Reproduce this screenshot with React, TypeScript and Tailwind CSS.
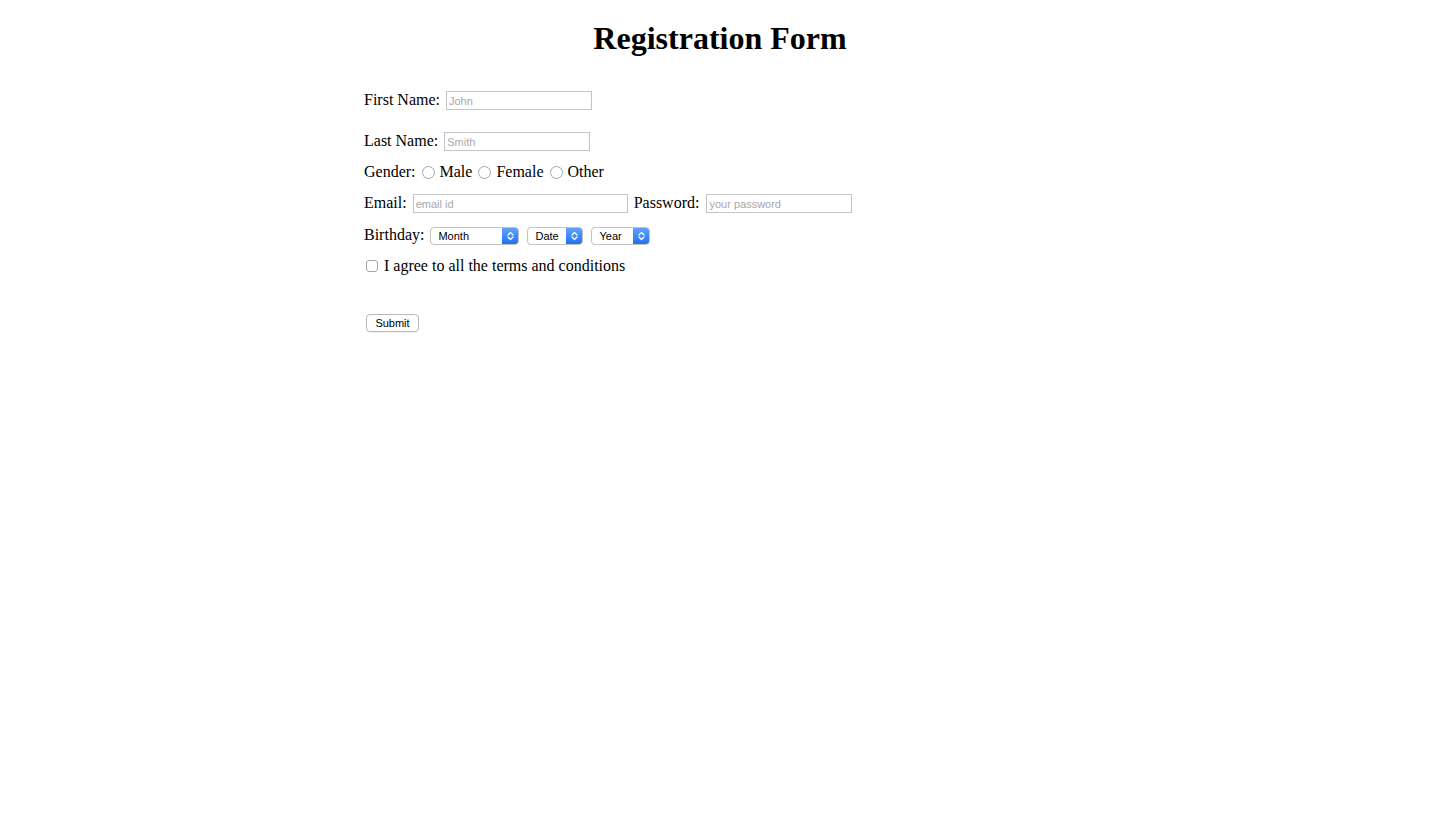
import React from 'react';

const serif = { fontFamily: '"Liberation Serif", "Times New Roman", serif' };

function TextBox({ placeholder, width, type = 'text' }: { placeholder: string; width: string; type?: string }) {
  return (
    <input
      type={type}
      placeholder={placeholder}
      className={`${width} h-[19px] border border-[#c4c4c4] bg-white px-[2px] pt-[1px] text-[11px] font-['Liberation_Sans',Arial,sans-serif] text-black placeholder:text-[#a8a8a8] outline-none`}
    />
  );
}

function Radio({ label }: { label: string }) {
  return (
    <span className="flex items-center">
      <span className="ml-[6px] mt-[1px] w-[13px] h-[13px] rounded-full border border-[#a6a6a6] bg-white" />
      <span className="ml-[5px]">{label}</span>
    </span>
  );
}

function Select({ label, width }: { label: string; width: string }) {
  return (
    <div className={`${width} h-[18px] flex rounded-[4px] border border-[#c2c2c2] bg-white overflow-hidden font-['Liberation_Sans',Arial,sans-serif] text-[11px] text-black`}>
      <span className="flex-1 pl-[7px] leading-[16px]">{label}</span>
      <span className="w-[16px] flex items-center justify-center bg-gradient-to-b from-[#5fa2f8] to-[#1f72f2]">
        <svg width="7" height="10" viewBox="0 0 7 10" fill="none" stroke="white" strokeWidth="1.3" strokeLinecap="round" strokeLinejoin="round">
          <path d="M1 4 L3.5 1.5 L6 4" />
          <path d="M1 6 L3.5 8.5 L6 6" />
        </svg>
      </span>
    </div>
  );
}

export default function App() {
  return (
    <div className="min-h-screen bg-white text-black text-[16px]" style={serif}>
      <h1 className="pt-[20px] text-center text-[32px] font-bold leading-[36px]">Registration Form</h1>

      <form className="w-[712px] mx-auto mt-[28px]">
        {/* names */}
        <div className="h-[31px] flex items-center">
          <span>First Name:</span>
          <span className="ml-[6px] mt-[1px] flex"><TextBox placeholder="John" width="w-[146px]" /></span>
        </div>
        <div className="h-[31px] mt-[10px] flex items-center">
          <span>Last Name:</span>
          <span className="ml-[6px] mt-[1px] flex"><TextBox placeholder="Smith" width="w-[146px]" /></span>
        </div>

        {/* gender */}
        <div className="h-[31px] flex items-center">
          <span>Gender:</span>
          <Radio label="Male" />
          <Radio label="Female" />
          <Radio label="Other" />
        </div>

        {/* email + password */}
        <div className="h-[31px] flex items-center">
          <span>Email:</span>
          <span className="ml-[6px] mt-[1px] flex"><TextBox placeholder="email id" width="w-[215px]" /></span>
          <span className="ml-[6px]">Password:</span>
          <span className="ml-[7px] mt-[1px] flex"><TextBox type="password" placeholder="your password" width="w-[146px]" /></span>
        </div>

        {/* birthday */}
        <div className="h-[31px] mt-[1px] flex items-center gap-[8px]">
          <span className="mr-[-2px]">Birthday:</span>
          <span className="mt-[2px] flex"><Select label="Month" width="w-[89px]" /></span>
          <span className="mt-[2px] flex"><Select label="Date" width="w-[56px]" /></span>
          <span className="mt-[2px] flex"><Select label="Year" width="w-[59px]" /></span>
        </div>

        {/* terms */}
        <div className="h-[31px] flex items-center">
          <span className="ml-[2px] mt-[1px] w-[12px] h-[12px] rounded-[3px] border border-[#a6a6a6] bg-white" />
          <span className="ml-[6px]">I agree to all the terms and conditions</span>
        </div>

        <div className="mt-[26px] h-[31px] flex items-center">
          <button
            type="button"
            className="ml-[2px] w-[53px] h-[18px] rounded-[4px] border border-[#b9b9b9] bg-white text-[11px] leading-[16px] font-['Liberation_Sans',Arial,sans-serif] text-black shadow-[0_1px_0_rgba(0,0,0,0.05)]"
          >
            Submit
          </button>
        </div>
      </form>
    </div>
  );
}
